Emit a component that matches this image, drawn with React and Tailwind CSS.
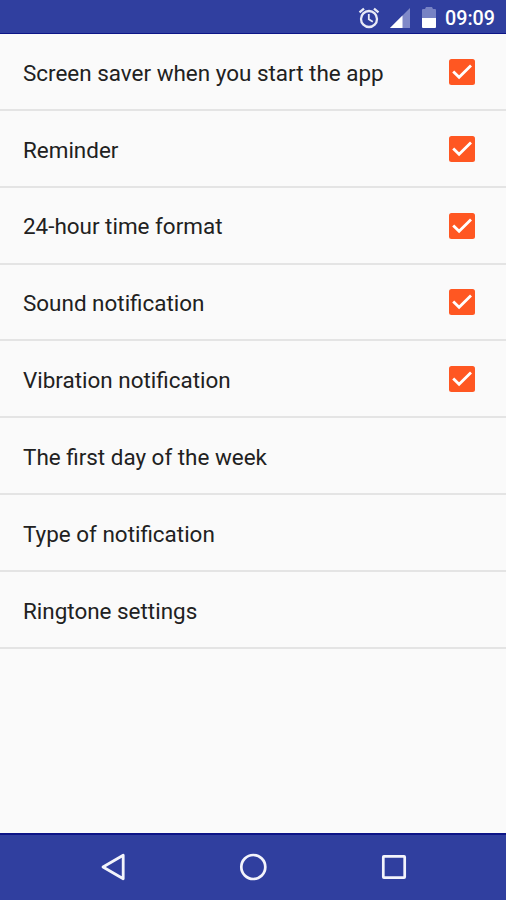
const settings = [
  { label: "Screen saver when you start the app", checked: true },
  { label: "Reminder", checked: true },
  { label: "24-hour time format", checked: true },
  { label: "Sound notification", checked: true },
  { label: "Vibration notification", checked: true },
  { label: "The first day of the week" },
  { label: "Type of notification" },
  { label: "Ringtone settings" },
];

export default function App() {
  return (
    <div className="flex h-screen w-full flex-col overflow-hidden bg-[#fafafa] font-['Roboto',sans-serif]">
      <StatusBar />

      {/* ── Settings list ── */}
      <ul className="flex-1">
        {settings.map((item) => (
          <SettingRow key={item.label} {...item} />
        ))}
      </ul>

      <NavBar />
    </div>
  );
}

function StatusBar() {
  return (
    <div className="flex h-[34px] items-center justify-end border-b border-[#0d1587] bg-[#303f9f] pr-[11px] pt-0.5 text-white">
      <svg
        className="size-[24px] text-[#e8eaf6]"
        viewBox="0 0 24 24"
        fill="none"
        stroke="currentColor"
        strokeWidth="2.3"
      >
        <circle cx="12" cy="13" r="8" />
        <path d="M2.5 6.4l4.5-3.8M21.5 6.4L17 2.6" />
        <path d="M11.8 8v5.3l4 2.4" strokeWidth="1.8" />
      </svg>
      <svg className="ml-[9px] h-5 w-5" viewBox="0 0 20 20">
        <path d="M20 0V20H0z" fill="#8089c8" />
        <path d="M12.5 7.5V20H0z" fill="#fff" />
      </svg>
      <svg className="ml-3 h-[21px] w-[14px]" viewBox="0 0 14 21">
        <path d="M4 0h6l1 2h2q1 0 1 1v8H0V3q0-1 1-1h2z" fill="#7782c4" />
        <path d="M0 11h14v9q0 1-1 1H1q-1 0-1-1z" fill="#fff" />
      </svg>
      <span className="ml-[9px] pt-[3px] text-[19.7px] font-medium leading-none">
        09:09
      </span>
    </div>
  );
}

function SettingRow({ label, checked }) {
  return (
    <li className="flex h-[76.85px] items-center justify-between border-b-2 border-[#e4e4e4] pl-[23px] pr-[31.5px] pt-px">
      <span className="pt-[2px] text-[22.45px] leading-none text-[#212121]">
        {label}
      </span>
      {checked && <Checkbox />}
    </li>
  );
}

function Checkbox() {
  return (
    <svg className="size-[26px]" viewBox="0 0 26 26">
      <rect width="26" height="26" rx="2.5" fill="#ff5722" />
      <path
        d="M4.2 12.4l5.9 5.9L22 6.6"
        fill="none"
        stroke="#fff"
        strokeWidth="2.8"
      />
    </svg>
  );
}

function NavBar() {
  return (
    <div className="flex h-[67px] items-center justify-between border-t-2 border-[#0d1587] bg-[#303f9f] pb-px pl-[101px] pr-[99px]">
      <svg className="h-[28px] w-[24px]" viewBox="0 0 24 28">
        <path
          d="M22.2 2.2V25.8L2 14z"
          fill="none"
          stroke="#f3f4fb"
          strokeWidth="2.8"
          strokeLinejoin="round"
        />
      </svg>
      <svg className="size-[28px]" viewBox="0 0 28 28">
        <circle
          cx="14.3"
          cy="14"
          r="12"
          fill="none"
          stroke="#f3f4fb"
          strokeWidth="2.7"
        />
      </svg>
      <svg className="size-[26px]" viewBox="0 0 26 26">
        <rect
          x="2.3"
          y="2.3"
          width="21.4"
          height="21.4"
          rx="0.6"
          fill="none"
          stroke="#f3f4fb"
          strokeWidth="2.7"
        />
      </svg>
    </div>
  );
}
